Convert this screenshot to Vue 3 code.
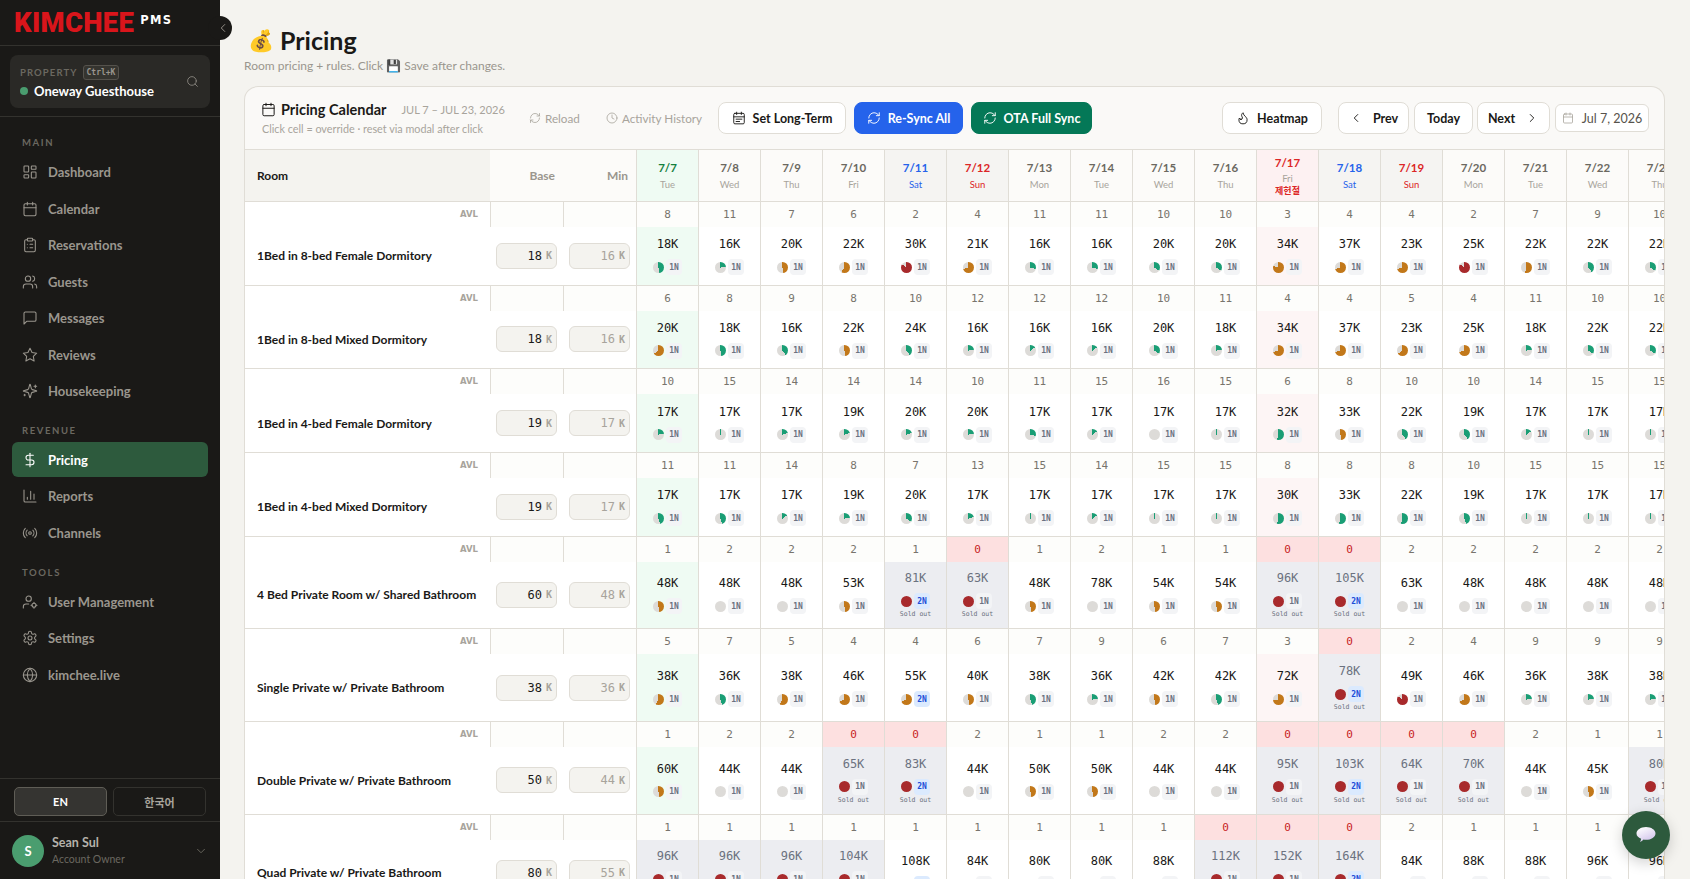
<script setup>
import { computed } from 'vue';

// lucide style icon bodies
const icons = {
  dashboard: '<rect x="3" y="3" width="7" height="9" rx="1"/><rect x="14" y="3" width="7" height="5" rx="1"/><rect x="14" y="12" width="7" height="9" rx="1"/><rect x="3" y="16" width="7" height="5" rx="1"/>',
  calendar: '<path d="M8 2v4M16 2v4"/><rect x="3" y="4" width="18" height="18" rx="2"/><path d="M3 10h18"/>',
  calendarDays: '<path d="M8 2v4M16 2v4"/><rect x="3" y="4" width="18" height="18" rx="2"/><path d="M3 10h18M7 14h10M7 18h6"/>',
  clipboard: '<rect x="8" y="2" width="8" height="4" rx="1"/><path d="M16 4h2a2 2 0 0 1 2 2v14a2 2 0 0 1-2 2H6a2 2 0 0 1-2-2V6a2 2 0 0 1 2-2h2"/><path d="M12 11h4M12 16h4M8 11h.01M8 16h.01"/>',
  users: '<path d="M16 21v-2a4 4 0 0 0-4-4H6a4 4 0 0 0-4 4v2"/><circle cx="9" cy="7" r="4"/><path d="M22 21v-2a4 4 0 0 0-3-3.87"/><path d="M16 3.13a4 4 0 0 1 0 7.75"/>',
  message: '<path d="M21 15a2 2 0 0 1-2 2H7l-4 4V5a2 2 0 0 1 2-2h14a2 2 0 0 1 2 2z"/>',
  star: '<polygon points="12 2 15.09 8.26 22 9.27 17 14.14 18.18 21.02 12 17.77 5.82 21.02 7 14.14 2 9.27 8.91 8.26"/>',
  sparkles: '<path d="M9.937 15.5A2 2 0 0 0 8.5 14.063l-6.135-1.582a.5.5 0 0 1 0-.962L8.5 9.936A2 2 0 0 0 9.937 8.5l1.582-6.135a.5.5 0 0 1 .963 0L14.063 8.5A2 2 0 0 0 15.5 9.937l6.135 1.581a.5.5 0 0 1 0 .964L15.5 14.063a2 2 0 0 0-1.437 1.437l-1.582 6.135a.5.5 0 0 1-.963 0z"/><path d="M20 3v4M22 5h-4M4 17v2M5 18H3"/>',
  dollar: '<path d="M12 2v20"/><path d="M17 5H9.5a3.5 3.5 0 0 0 0 7h5a3.5 3.5 0 0 1 0 7H6"/>',
  chart: '<path d="M3 3v16a2 2 0 0 0 2 2h16"/><path d="M18 17V9M13 17V5M8 17v-3"/>',
  radio: '<path d="M4.9 19.1C1 15.2 1 8.8 4.9 4.9"/><path d="M7.8 16.2c-2.3-2.3-2.3-6.1 0-8.5"/><circle cx="12" cy="12" r="2"/><path d="M16.2 7.8c2.3 2.3 2.3 6.1 0 8.5"/><path d="M19.1 4.9C23 8.8 23 15.1 19.1 19"/>',
  userCog: '<circle cx="10" cy="7" r="4"/><path d="M10 15H6a4 4 0 0 0-4 4v2"/><circle cx="18" cy="17" r="3"/><path d="M18 12.5V14M18 20v1.5M13.5 17H15M21 17h1.5"/>',
  settings: '<path d="M12.22 2h-.44a2 2 0 0 0-2 2v.18a2 2 0 0 1-1 1.73l-.43.25a2 2 0 0 1-2 0l-.15-.08a2 2 0 0 0-2.73.73l-.22.38a2 2 0 0 0 .73 2.73l.15.1a2 2 0 0 1 1 1.72v.51a2 2 0 0 1-1 1.74l-.15.09a2 2 0 0 0-.73 2.73l.22.38a2 2 0 0 0 2.73.73l.15-.08a2 2 0 0 1 2 0l.43.25a2 2 0 0 1 1 1.73V20a2 2 0 0 0 2 2h.44a2 2 0 0 0 2-2v-.18a2 2 0 0 1 1-1.73l.43-.25a2 2 0 0 1 2 0l.15.08a2 2 0 0 0 2.73-.73l.22-.39a2 2 0 0 0-.73-2.73l-.15-.08a2 2 0 0 1-1-1.74v-.5a2 2 0 0 1 1-1.74l.15-.09a2 2 0 0 0 .73-2.73l-.22-.38a2 2 0 0 0-2.73-.73l-.15.08a2 2 0 0 1-2 0l-.43-.25a2 2 0 0 1-1-1.73V4a2 2 0 0 0-2-2z"/><circle cx="12" cy="12" r="3"/>',
  globe: '<circle cx="12" cy="12" r="10"/><path d="M12 2a14.5 14.5 0 0 0 0 20 14.5 14.5 0 0 0 0-20"/><path d="M2 12h20"/>',
  refresh: '<path d="M3 12a9 9 0 0 1 9-9 9.75 9.75 0 0 1 6.74 2.74L21 8"/><path d="M21 3v5h-5"/><path d="M21 12a9 9 0 0 1-9 9 9.75 9.75 0 0 1-6.74-2.74L3 16"/><path d="M8 16H3v5"/>',
  clock: '<circle cx="12" cy="12" r="10"/><polyline points="12 6 12 12 16 14"/>',
  flame: '<path d="M8.5 14.5A2.5 2.5 0 0 0 11 12c0-1.38-.5-2-1-3-1.072-2.143-.224-4.054 2-6 .5 2.5 2 4.9 4 6.5 2 1.6 3 3.5 3 5.5a7 7 0 1 1-14 0c0-1.153.433-2.294 1-3a2.5 2.5 0 0 0 2.5 2.5z"/>',
  search: '<circle cx="11" cy="11" r="8"/><path d="m21 21-4.3-4.3"/>',
  left: '<path d="m15 18-6-6 6-6"/>',
  right: '<path d="m9 18 6-6-6-6"/>',
  down: '<path d="m6 9 6 6 6-6"/>',
};

const navGroups = [
  { label: 'MAIN', items: [
    { name: 'Dashboard', icon: 'dashboard' },
    { name: 'Calendar', icon: 'calendar' },
    { name: 'Reservations', icon: 'clipboard' },
    { name: 'Guests', icon: 'users' },
    { name: 'Messages', icon: 'message' },
    { name: 'Reviews', icon: 'star' },
    { name: 'Housekeeping', icon: 'sparkles' },
  ] },
  { label: 'REVENUE', items: [
    { name: 'Pricing', icon: 'dollar', active: true },
    { name: 'Reports', icon: 'chart' },
    { name: 'Channels', icon: 'radio' },
  ] },
  { label: 'TOOLS', items: [
    { name: 'User Management', icon: 'userCog' },
    { name: 'Settings', icon: 'settings' },
    { name: 'kimchee.live', icon: 'globe' },
  ] },
];

const days = [
  ['7/7', 'Tue', 'today'], ['7/8', 'Wed'], ['7/9', 'Thu'], ['7/10', 'Fri'], ['7/11', 'Sat', 'sat'], ['7/12', 'Sun', 'sun'],
  ['7/13', 'Mon'], ['7/14', 'Tue'], ['7/15', 'Wed'], ['7/16', 'Thu'], ['7/17', 'Fri', 'holiday', '제헌절'], ['7/18', 'Sat', 'sat'],
  ['7/19', 'Sun', 'sun'], ['7/20', 'Mon'], ['7/21', 'Tue'], ['7/22', 'Wed'], ['7/23', 'Thu'],
].map(([date, dow, kind, note]) => ({ date, dow, kind, note }));

// tone: g green, o orange, r red, n none
const rawRows = [
  { name: '1Bed in 8-bed Female Dormitory', base: 18, min: 16,
    avl: [8, 11, 7, 6, 2, 4, 11, 11, 10, 10, 3, 4, 4, 2, 7, 9, 10],
    price: [18, 16, 20, 22, 30, 21, 16, 16, 20, 20, 34, 37, 23, 25, 22, 22, 22],
    occ: [50, 25, 50, 60, 85, 70, 30, 30, 35, 35, 80, 70, 70, 85, 55, 40, 35], tone: 'ggoorogggg' + 'ooorogg' },
  { name: '1Bed in 8-bed Mixed Dormitory', base: 18, min: 16,
    avl: [6, 8, 9, 8, 10, 12, 12, 12, 10, 11, 4, 4, 5, 4, 11, 10, 10],
    price: [20, 18, 16, 22, 24, 16, 16, 16, 20, 18, 34, 37, 23, 25, 18, 22, 22],
    occ: [65, 50, 40, 50, 40, 25, 15, 15, 35, 25, 70, 70, 65, 70, 25, 35, 35], tone: 'oggogggggg' + 'ooooggg' },
  { name: '1Bed in 4-bed Female Dormitory', base: 19, min: 17,
    avl: [10, 15, 14, 14, 14, 10, 11, 15, 16, 15, 6, 8, 10, 10, 14, 15, 15],
    price: [17, 17, 17, 19, 20, 20, 17, 17, 17, 17, 32, 33, 22, 19, 17, 17, 17],
    occ: [25, 3, 20, 20, 20, 25, 30, 15, 0, 3, 55, 50, 40, 40, 15, 3, 3], tone: 'ggggggggng' + 'gogg' + 'ggg' },
  { name: '1Bed in 4-bed Mixed Dormitory', base: 19, min: 17,
    avl: [11, 11, 14, 8, 7, 13, 15, 14, 15, 15, 8, 8, 8, 10, 15, 15, 15],
    price: [17, 17, 17, 19, 20, 17, 17, 17, 17, 17, 30, 33, 22, 19, 17, 17, 17],
    occ: [45, 45, 15, 25, 35, 20, 3, 15, 3, 3, 55, 55, 55, 45, 3, 3, 3], tone: 'gggggggggg' + 'ggggggg' },
  { name: '4 Bed Private Room w/ Shared Bathroom', base: 60, min: 48,
    avl: [1, 2, 2, 2, 1, 0, 1, 2, 1, 1, 0, 0, 2, 2, 2, 2, 2],
    price: [48, 48, 48, 53, 81, 63, 48, 78, 54, 54, 96, 105, 63, 48, 48, 48, 48],
    occ: [50, 0, 0, 50, 100, 100, 50, 0, 50, 50, 100, 100, 0, 0, 0, 0, 0], tone: 'onnorronoo' + 'rrnnnnn', twoNight: true },
  { name: 'Single Private w/ Private Bathroom', base: 38, min: 36,
    avl: [5, 7, 5, 4, 4, 6, 7, 9, 6, 7, 3, 0, 2, 4, 9, 9, 9],
    price: [38, 36, 38, 46, 55, 40, 38, 36, 42, 42, 72, 78, 49, 46, 36, 38, 38],
    occ: [58, 45, 58, 68, 68, 50, 45, 25, 50, 45, 75, 100, 85, 68, 25, 25, 25], tone: 'ogooooggog' + 'orroggg', twoNight: true },
  { name: 'Double Private w/ Private Bathroom', base: 50, min: 44,
    avl: [1, 2, 2, 0, 0, 2, 1, 1, 2, 2, 0, 0, 0, 0, 2, 1, 1],
    price: [60, 44, 44, 65, 83, 44, 50, 50, 44, 44, 95, 103, 64, 70, 44, 45, 80],
    occ: [50, 0, 0, 100, 100, 0, 50, 50, 0, 0, 100, 100, 100, 100, 0, 50, 100], tone: 'onnrrnoonn' + 'rrrrnor', twoNight: true },
  { name: 'Quad Private w/ Private Bathroom', base: 80, min: 55,
    avl: [1, 1, 1, 1, 1, 1, 1, 1, 1, 0, 0, 0, 2, 1, 1, 1, 1],
    price: [96, 96, 96, 104, 108, 84, 80, 80, 88, 112, 152, 164, 84, 88, 88, 96, 96],
    occ: [100, 100, 100, 100, 50, 50, 50, 50, 50, 100, 100, 100, 0, 50, 50, 50, 50], tone: 'rrrrooooo' + 'rrrnoooo', twoNight: true,
    soldDays: [0, 1, 2, 3, 9, 10, 11] },
];

const toneColor = { g: '#1a9e75', o: '#c2781a', r: '#a82a2c', n: '#dddbd8' };

const rooms = computed(() => rawRows.map((r) => ({
  ...r,
  cells: days.map((d, i) => {
    const sold = r.soldDays ? r.soldDays.includes(i) : r.avl[i] === 0 || (r.occ[i] === 100);
    const pct = r.occ[i];
    const color = toneColor[r.tone[i]];
    return {
      avl: r.avl[i],
      price: r.price[i] + 'K',
      sold,
      stay: r.twoNight && (i === 4 || i === 11) ? '2N' : '1N',
      kind: d.kind,
      pie: `conic-gradient(${color} ${pct}%, #dddbd8 ${pct}% 100%)`,
    };
  }),
})));
</script>

<template>
  <div class="app">
    <aside class="sidebar">
      <div class="logo-row">
        <span class="logo">KIMCHEE</span>
        <span class="logo-pms">PMS</span>
      </div>
      <button class="collapse"><svg class="ic" width="14" height="14" viewBox="0 0 24 24" v-html="icons.left"></svg></button>

      <div class="prop-wrap">
        <div class="prop-card">
          <div>
            <div class="prop-top"><span class="prop-label">PROPERTY</span><kbd class="kbd">Ctrl+K</kbd></div>
            <div class="prop-name"><span class="dot"></span>Oneway Guesthouse</div>
          </div>
          <svg class="ic prop-search" width="13" height="13" viewBox="0 0 24 24" v-html="icons.search"></svg>
        </div>
      </div>

      <nav class="nav">
        <div v-for="g in navGroups" :key="g.label" class="nav-group">
          <div class="nav-label">{{ g.label }}</div>
          <a v-for="item in g.items" :key="item.name" class="nav-item" :class="{ active: item.active }">
            <svg class="ic" width="16" height="16" viewBox="0 0 24 24" v-html="icons[item.icon]"></svg>
            <span>{{ item.name }}</span>
          </a>
        </div>
      </nav>

      <div class="lang">
        <button class="lang-btn on">EN</button>
        <button class="lang-btn">한국어</button>
      </div>
      <div class="account">
        <div class="avatar">S</div>
        <div class="account-text">
          <div class="account-name">Sean Sul</div>
          <div class="account-role">Account Owner</div>
        </div>
        <svg class="ic account-chev" width="14" height="14" viewBox="0 0 24 24" v-html="icons.down"></svg>
      </div>
    </aside>

    <main class="main">
      <h1 class="title"><span class="emoji">💰</span>Pricing</h1>
      <p class="subtitle">Room pricing + rules. Click 💾 Save after changes.</p>

      <section class="card">
        <header class="card-head">
          <div class="head-left">
            <div class="head-title">
              <svg class="ic" width="15" height="15" viewBox="0 0 24 24" v-html="icons.calendar"></svg>
              <strong>Pricing Calendar</strong>
              <span class="range">JUL 7 – JUL 23, 2026</span>
            </div>
            <div class="head-hint">Click cell = override · reset via modal after click</div>
          </div>
          <button class="ghost reload"><svg class="ic" width="12" height="12" viewBox="0 0 24 24" v-html="icons.refresh"></svg>Reload</button>
          <button class="ghost history"><svg class="ic" width="12" height="12" viewBox="0 0 24 24" v-html="icons.clock"></svg>Activity History</button>
          <button class="btn btn-long"><svg class="ic" width="14" height="14" viewBox="0 0 24 24" v-html="icons.calendarDays"></svg>Set Long-Term</button>
          <button class="btn btn-blue"><svg class="ic" width="14" height="14" viewBox="0 0 24 24" v-html="icons.refresh"></svg>Re-Sync All</button>
          <button class="btn btn-green"><svg class="ic" width="14" height="14" viewBox="0 0 24 24" v-html="icons.refresh"></svg>OTA Full Sync</button>
          <button class="btn btn-heat"><svg class="ic" width="14" height="14" viewBox="0 0 24 24" v-html="icons.flame"></svg>Heatmap</button>
          <button class="btn btn-prev"><svg class="ic" width="14" height="14" viewBox="0 0 24 24" v-html="icons.left"></svg>Prev</button>
          <button class="btn btn-today">Today</button>
          <button class="btn btn-next">Next<svg class="ic" width="14" height="14" viewBox="0 0 24 24" v-html="icons.right"></svg></button>
          <div class="date-pick"><svg class="ic" width="12" height="12" viewBox="0 0 24 24" v-html="icons.calendar"></svg>Jul 7, 2026</div>
        </header>

        <div class="table">
          <div class="grid head-row">
            <div class="th-room">Room</div>
            <div class="th-num">Base</div>
            <div class="th-num th-min">Min</div>
            <div v-for="d in days" :key="d.date" class="th-day" :class="d.kind">
              <div class="th-date">{{ d.date }}</div>
              <div class="th-dow">{{ d.dow }}</div>
              <div v-if="d.note" class="th-note">{{ d.note }}</div>
            </div>
          </div>

          <div v-for="room in rooms" :key="room.name" class="grid room-row">
            <div class="avl-label">AVL</div>
            <div class="avl-blank"></div>
            <div class="avl-blank last"></div>
            <div v-for="(c, i) in room.cells" :key="'a' + i" class="avl" :class="{ zero: c.avl === 0 }">{{ c.avl }}</div>

            <div class="room-name">{{ room.name }}</div>
            <div class="rate"><div class="rate-box">{{ room.base }}<span class="k">K</span></div></div>
            <div class="rate last"><div class="rate-box muted">{{ room.min }}<span class="k">K</span></div></div>
            <div v-for="(c, i) in room.cells" :key="'c' + i" class="cell" :class="[c.kind, { sold: c.sold }]">
              <div class="price">{{ c.price }}</div>
              <div class="meta">
                <span class="pie" :style="{ background: c.pie }"></span>
                <span class="stay" :class="{ two: c.stay === '2N' }">{{ c.stay }}</span>
              </div>
              <div v-if="c.sold" class="sold-label">Sold out</div>
            </div>
          </div>
        </div>
      </section>
    </main>

    <button class="chat">
      <svg width="22" height="18" viewBox="0 0 22 18">
        <defs>
          <linearGradient id="bubble" x1="0.2" y1="0" x2="0.8" y2="1">
            <stop offset="0" stop-color="#ffffff" />
            <stop offset="1" stop-color="#cfc0ea" />
          </linearGradient>
        </defs>
        <path d="M11 1c5.2 0 9.5 2.9 9.5 6.4s-4.3 6.4-9.5 6.4c-.9 0-1.7-.1-2.5-.2-.9 1.2-2.2 2-3.6 2.3.7-.9 1.1-1.9 1.2-3.1C3.3 11.6 1.5 9.7 1.5 7.4 1.5 3.9 5.8 1 11 1z" fill="url(#bubble)" />
      </svg>
    </button>
  </div>
</template>

<style>
html, body { margin: 0; background: #fff; overflow: hidden; }
</style>

<style scoped>
.app { position: relative; display: flex; height: 879px; width: 1707px; overflow: hidden; font-family: Lato, "Noto Sans CJK KR", sans-serif; color: #1a1917; }
.ic { fill: none; stroke: currentColor; stroke-width: 1.6; stroke-linecap: round; stroke-linejoin: round; flex: none; }
button { font-family: inherit; }

/* sidebar */
.sidebar { width: 220px; flex: none; background: #1a1917; display: flex; flex-direction: column; color: #9a968e; }
.logo-row { height: 46px; box-sizing: border-box; border-bottom: 1px solid #33322e; display: flex; align-items: center; padding-left: 14px; gap: 6px; }
.logo { font-family: Roboto, sans-serif; font-weight: 900; font-size: 27.5px; letter-spacing: 0.3px; line-height: 1; color: #d9151b; }
.logo-pms { font-family: "DejaVu Sans", sans-serif; font-weight: 700; font-size: 11.5px; letter-spacing: 1.3px; color: #fff; margin-top: -5px; }
.collapse { position: absolute; left: 208px; top: 16px; width: 24px; height: 24px; border-radius: 50%; border: 0; background: #1a1917; color: #9a968e; padding: 0 0 0 6px; display: flex; align-items: center; justify-content: center; z-index: 3; }
.prop-wrap { padding: 9px 10px 8px; border-bottom: 1px solid #33322e; }
.prop-card { height: 53px; box-sizing: border-box; background: #2a2926; border-radius: 8px; padding: 8px 10px; display: flex; align-items: center; justify-content: space-between; }
.prop-top { display: flex; align-items: center; gap: 5px; }
.prop-label { font-size: 9.5px; font-weight: 700; letter-spacing: 1.1px; color: #6b6860; }
.kbd { font-family: "DejaVu Sans Mono", monospace; font-size: 8px; font-weight: 700; color: #9a968e; border: 1px solid #55524c; background: #35342f; border-radius: 3px; padding: 1px 3px; line-height: 11px; }
.prop-name { display: flex; align-items: center; color: #fff; font-weight: 700; font-size: 13px; margin-top: 3px; }
.dot { width: 8px; height: 8px; border-radius: 50%; background: #4a9d6f; margin: 0 6px 0 0; }
.prop-search { color: #8d8a83; margin-right: 1px; }
.nav { flex: 1; padding: 20px 12px 0; }
.nav-group { margin-bottom: 16px; }
.nav-label { font-size: 9.5px; font-weight: 700; letter-spacing: 1.6px; color: #6b6860; padding-left: 10px; line-height: 12px; margin-bottom: 4.75px; }
.nav-item { height: 36.5px; display: flex; align-items: center; gap: 10px; padding-left: 10px; font-size: 13px; font-weight: 700; border-radius: 6px; box-sizing: border-box; }
.nav-item.active { background: #2d5a3d; color: #fff; height: 35px; margin-bottom: 0.75px; margin-top: 0.75px; width: 196px; }
.lang { display: flex; gap: 6px; padding: 8px 14px 5px; border-top: 1px solid #33322e; border-bottom: 1px solid #33322e; }
.lang-btn { flex: 1; height: 29px; border-radius: 5px; background: transparent; border: 1px solid #33322e; color: #a8a49c; font-size: 11px; font-weight: 700; padding: 0; }
.lang-btn.on { background: #353431; border-color: #5f5d56; color: #fff; }
.account { height: 57px; display: flex; align-items: center; padding: 0 12px; gap: 8px; }
.avatar { width: 32px; height: 32px; border-radius: 50%; background: #4a9d6f; color: #fff; font-weight: 700; font-size: 13px; display: flex; align-items: center; justify-content: center; }
.account-text { flex: 1; }
.account-name { font-size: 12.5px; font-weight: 700; color: #b5b2ab; line-height: 15px; }
.account-role { font-size: 10.5px; color: #6b6860; line-height: 15px; margin-top: 2px; }
.account-chev { color: #6b6860; }

/* main */
.main { flex: 1; margin-right: 17px; background: #f4f3ef; padding: 0 25px 0 24px; min-width: 0; overflow: hidden; }
.title { margin: 25px 0 0; font-size: 25px; line-height: 30px; font-weight: 700; display: flex; align-items: center; padding-left: 4px; }
.emoji { font-size: 21px; margin-right: 6px; }
.subtitle { margin: 3px 0 0; font-size: 12px; line-height: 16px; color: #9a968e; }
.card { margin-top: 12px; background: #faf9f7; border: 1px solid #e0ddd6; border-bottom: 0; border-radius: 14px 14px 0 0; overflow: hidden; }
.card-head { height: 63px; box-sizing: border-box; border-bottom: 1px solid #e0ddd6; display: flex; align-items: center; padding: 0 0 0 17px; }
.head-left { width: 267px; flex: none; margin-top: -1px; }
.head-title { display: flex; align-items: center; gap: 5px; margin-left: -1px; }
.head-title strong { font-size: 14.5px; font-weight: 700; }
.range { font-size: 11px; color: #a8a49c; margin-left: 10px; }
.head-hint { font-size: 10.8px; color: #a8a49c; margin-top: 4px; line-height: 13px; }
.ghost { background: none; border: 0; padding: 0; color: #a8a49c; font-size: 11.7px; display: flex; align-items: center; gap: 4px; white-space: nowrap; }
.reload { width: 52px; }
.history { margin-left: 25px; width: 96px; }
.btn { height: 32px; box-sizing: border-box; border: 1px solid #e0ddd6; background: #fff; border-radius: 8px; font-size: 12.5px; font-weight: 700; color: #1a1917; display: flex; align-items: center; justify-content: center; gap: 7px; padding: 0; }
.btn-long { margin-left: 16px; width: 128px; }
.btn-blue { margin-left: 8px; width: 109px; background: #2563eb; border-color: #2563eb; color: #fff; }
.btn-green { margin-left: 8px; width: 121px; background: #047857; border-color: #047857; color: #fff; }
.btn-heat { margin-left: 130px; width: 100px; }
.btn-prev { margin-left: 16px; width: 71px; gap: 10px; }
.btn-today { margin-left: 5px; width: 59px; }
.btn-next { margin-left: 4px; width: 73px; gap: 10px; }
.date-pick { margin-left: 5px; width: 94px; height: 28px; box-sizing: border-box; border: 1px solid #e0ddd6; background: #fff; border-radius: 6px; font-size: 12.5px; color: #57534c; display: flex; align-items: center; justify-content: center; gap: 8px; }
.date-pick .ic { color: #a8a49c; }

/* table */
.table { width: 1420px; overflow: hidden; background: #fff; }
.grid { display: grid; grid-template-columns: 245px 73px 74px repeat(17, 62px); width: 1446px; }
.head-row { height: 52px; box-sizing: border-box; border-bottom: 1px solid #e0ddd6; }
.th-room { background: #f4f3ef; font-size: 12px; font-weight: 700; display: flex; align-items: center; padding-left: 12px; }
.th-num { background: #fcfbf9; font-size: 12px; font-weight: 700; color: #9a968e; display: flex; align-items: center; justify-content: flex-end; padding-right: 8px; }
.th-min { padding-right: 8px; border-right: 1px solid #e0ddd6; }
.th-day { background: #fcfbf9; border-right: 1px solid #e0ddd6; display: flex; flex-direction: column; align-items: center; justify-content: center; }
.th-date { font-size: 11.5px; font-weight: 700; color: #6b6860; line-height: 14px; }
.th-dow { font-size: 9.5px; color: #a8a49c; line-height: 13px; margin-top: 3px; }
.th-note { font-size: 9px; font-weight: 700; color: #dc2626; line-height: 11px; }
.th-day.today { background: #effbf3; }
.th-day.today .th-date { color: #15803d; }
.th-day.sat, .th-day.sun { background: #f5f4f2; }
.th-day.sat .th-date, .th-day.sat .th-dow { color: #2563eb; }
.th-day.sun .th-date, .th-day.sun .th-dow { color: #dc2626; }
.th-day.holiday { background: #fdf1f2; }
.th-day.holiday .th-date { color: #dc2626; }
.th-day.holiday .th-dow { margin-top: 2px; }

.room-row { grid-template-rows: 25px auto; border-bottom: 1px solid #e0ddd6; }
.avl-label { font-family: "DejaVu Sans", sans-serif; font-size: 8.5px; font-weight: 700; color: #a8a49c; text-align: right; padding-right: 12px; line-height: 25px; }
.avl-blank { background: #fdfdfb; border-left: 1px solid #e0ddd6; }
.avl-blank.last { border-right: 1px solid #e0ddd6; }
.avl { font-family: "DejaVu Sans Mono", monospace; font-size: 11px; color: #78746c; background: #fdfdfb; border-right: 1px solid #e0ddd6; text-align: center; line-height: 25px; }
.avl.zero { background: #fde0e0; color: #c81e1e; }
.room-name { font-size: 12px; font-weight: 700; display: flex; align-items: center; padding-left: 12px; }
.rate { display: flex; align-items: center; padding-left: 6px; }
.rate.last { border-right: 1px solid #e0ddd6; }
.rate-box { width: 61px; height: 26px; box-sizing: border-box; background: #f4f3ef; border: 1px solid #e0ddd6; border-radius: 6px; font-family: "DejaVu Sans Mono", monospace; font-size: 12px; display: flex; align-items: center; justify-content: flex-end; padding-right: 4px; }
.rate-box.muted { color: #a8a49c; }
.k { font-size: 10px; font-weight: 700; color: #a8a49c; margin-left: 4px; }
.cell { min-height: 57.67px; box-sizing: border-box; border-right: 1px solid #e0ddd6; display: flex; flex-direction: column; align-items: center; justify-content: center; font-family: "DejaVu Sans Mono", monospace; background: #fff; }
.cell.today { background: #effbf3; }
.cell.holiday { background: #fdf5f5; }
.cell.sold { background: #ecedf1; }
.price { font-size: 12px; line-height: 17px; color: #1a1917; }
.sold .price { color: #6b7280; }
.meta { display: flex; align-items: center; gap: 2px; margin-top: 6px; }
.pie { width: 11px; height: 11px; border-radius: 50%; }
.stay { width: 16px; height: 16px; border-radius: 4px; background: #f3f4f6; color: #6b7280; font-size: 8px; font-weight: 700; display: flex; align-items: center; justify-content: center; }
.stay.two { background: #dbeafe; color: #1d4ed8; }
.sold-label { font-size: 6.5px; line-height: 10px; color: #6b7280; height: 10px; }
.room-row:has(.sold) .cell { min-height: 66.67px; }

.chat { position: absolute; left: 1622px; top: 811px; width: 48px; height: 48px; border-radius: 50%; border: 0; background: #2d5a3d; box-shadow: 0 4px 14px rgba(0, 0, 0, 0.18); display: flex; align-items: center; justify-content: center; padding: 0; z-index: 4; }
</style>
